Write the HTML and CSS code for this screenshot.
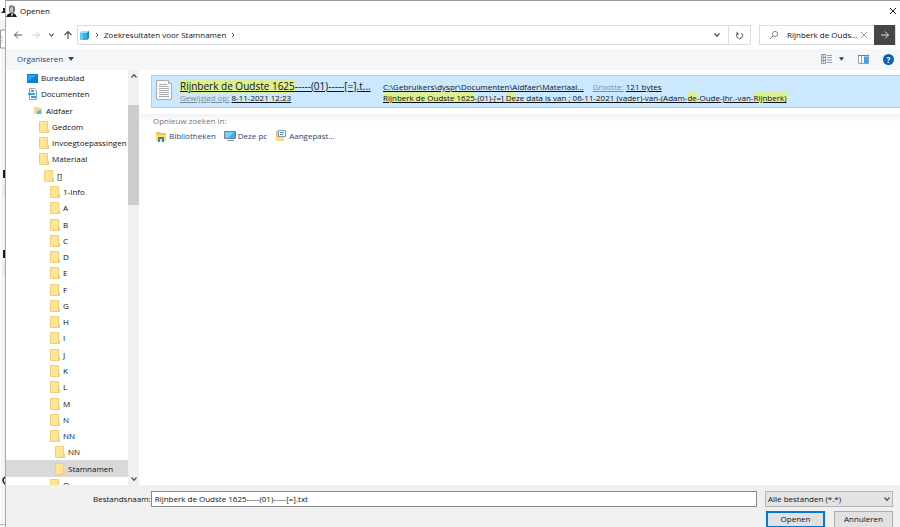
FILE: index.html
```html
<!DOCTYPE html>
<html lang="nl">
<head>
<meta charset="utf-8">
<title>Openen</title>
<link rel="stylesheet" href="styles.css">
</head>
<body>
<svg class="defs" aria-hidden="true">
  <symbol id="folder" viewBox="0 0 10 12"><path d="M0.5 0.5h8v7l1 1v3h-9z" fill="#ffe594" stroke="#efd077"/><path d="M8.500 7.500l1 1v3H7.500z" fill="#f0cb68"/></symbol>
  <symbol id="down" viewBox="0 0 8 8"><path d="M1.5 2.5L4 5.2l2.500-2.700" fill="none" stroke="#555" stroke-width="1.300"/></symbol>
  <symbol id="right" viewBox="0 0 8 8"><path d="M3 2l2 2-2 2" fill="none" stroke="#555"/></symbol>
</svg>
<div class="behind" aria-hidden="true">
  <svg viewBox="0 0 5 527" preserveAspectRatio="xMinYMin slice">
    <path d="M0 0h5v527H0z" fill="#f4f4f4"/><path d="M0 0h5v20H0z" fill="#fff"/><path d="M1 13l2-2V8h2v5z" fill="#222"/>
    <path d="M5 30H0.500v18H5" fill="#fff" stroke="#999"/><path d="M2 36v8" stroke="#aaa" stroke-dasharray="1 1"/>
    <path d="M0 50h1v474H0z" fill="#fff"/><path d="M3 170h2v8H3zM3 250h2v8H3z" fill="#111b2c"/>
    <path d="M3 184h2v14H3zM3 263h2v14H3z" fill="#e8e8e8"/><path d="M5 477q-4 3 0 7" fill="none" stroke="#111" stroke-width="1.500"/><path d="M0 524.500h5" stroke="#bbb"/>
  </svg>
</div>
<main class="dialog">
  <header class="title">
    <svg width="11" height="12" viewBox="0 0 11 12"><path d="M0 12q1-3 4-4h3q3 1 4 4z" fill="#1b1b1b"/><path d="M3 1q3-2 6 1v4L7 9H5L3 6z" fill="#777"/><path d="M4 3q2-2 3 0v3L6 8 4 6z" fill="#c9c9c4"/><path d="M5 9l1 3 1-3z" fill="#eee"/></svg>
    <h1>Openen</h1>
    <button class="plain" aria-label="Sluiten"><svg width="8" height="8" viewBox="0 0 8 8"><path d="M1 1l6 6M7 1L1 7" stroke="#222"/></svg></button>
  </header>
  <nav class="navbar">
    <div class="arrows">
      <button class="plain" aria-label="Terug"><svg width="10" height="10" viewBox="0 0 10 10"><path d="M9 5H1.500M5 1.500L1.500 5 5 8.500" fill="none" stroke="#555"/></svg></button>
      <button class="plain" aria-label="Vooruit"><svg width="10" height="10" viewBox="0 0 10 10"><path d="M1 5h7.500M5.500 2l3 3-3 3" fill="none" stroke="#d0d0d0"/></svg></button>
      <button class="plain" aria-label="Recente locaties"><svg width="7" height="8"><use href="#down"/></svg></button>
      <button class="plain" aria-label="Omhoog"><svg width="10" height="10" viewBox="0 0 10 10"><path d="M5 9V1.500M1.500 5L5 1.500 8.500 5" fill="none" stroke="#555" stroke-width="1.200"/></svg></button>
    </div>
    <div class="address">
      <svg width="11" height="11" viewBox="0 0 11 11"><path d="M1 3l2-2h7v7l-2 2H1z" fill="#35aee8"/><path d="M1 3l2-2h7L8 3z" fill="#9be0fb"/><path d="M8 3l2-2v7l-2 2z" fill="#168bd0"/><path d="M1 3h3v7H1z" fill="#62cbf5"/></svg>
      <svg width="8" height="8"><use href="#right"/></svg>
      <span>Zoekresultaten voor Stamnamen</span>
      <svg width="8" height="8"><use href="#right"/></svg>
      <button class="plain drop" aria-label="Vorige locaties"><svg width="8" height="8"><use href="#down"/></svg></button>
      <button class="plain refresh" aria-label="Vernieuwen"><svg width="9" height="9" viewBox="0 0 9 9"><path d="M6.500 2.200A3 3 0 1 1 3 2M2 .8v2.200h2.200" fill="none" stroke="#555"/></svg></button>
    </div>
    <div class="search">
      <svg width="10" height="10" viewBox="0 0 10 10"><circle cx="6" cy="4" r="2.600" fill="none" stroke="#888"/><path d="M4 6L1 9" stroke="#888"/></svg>
      <input aria-label="Zoeken" value="Rijnberk de Ouds...">
      <button class="plain" aria-label="Zoekopdracht wissen"><svg width="8" height="8" viewBox="0 0 8 8"><path d="M1 1l6 6M7 1L1 7" stroke="#999"/></svg></button>
      <button class="go" aria-label="Zoeken starten"><svg width="10" height="10" viewBox="0 0 10 10"><path d="M1 5h7.500M5 1.500L8.500 5 5 8.500" fill="none" stroke="#ddd"/></svg></button>
    </div>
  </nav>
  <div class="toolbar">
    <button class="plain organise">Organiseren <svg width="6" height="4" viewBox="0 0 6 4"><path d="M0 0h6L3 4z" fill="#29466f"/></svg></button>
    <button class="plain view" aria-label="Weergave"><svg width="11" height="10" viewBox="0 0 11 10"><path d="M.5.5h4v9h-4zM.5 3.500h4M.5 6.500h4" fill="#eee" stroke="#999"/><path d="M2 2h1M2 5h1M2 8h1" stroke="#4479b8"/><path d="M6 1.500h5M6 3.500h5M6 6h5M6 8.500h5" stroke="#8aa0c4"/></svg><svg width="5" height="4" viewBox="0 0 6 4"><path d="M0 0h6L3 4z" fill="#1c3c68"/></svg></button>
    <button class="plain" aria-label="Voorbeeldvenster"><svg width="11" height="9" viewBox="0 0 11 9"><path d="M.5.5h10v8H.5zM3.500 1v7" fill="#fff" stroke="#8fa0b2"/><path d="M6 1.500h4V8H6z" fill="#3ba2ea"/><path d="M0 .5h11" stroke="#67819b"/></svg></button>
    <button class="help" aria-label="Help">?</button>
  </div>
  <div class="content">
    <aside class="side">
      <ul class="tree">
        <li class="l0"><svg width="11" height="9" viewBox="0 0 11 9"><path d="M0 0h11v9H0z" fill="#087fd9"/><path d="M1 1h9L1 7z" fill="#21a7f5"/></svg>Bureaublad</li>
        <li class="l0"><svg width="11" height="12" viewBox="0 0 11 12"><path d="M2.500.5h5l2 2v9h-7z" fill="#f5f9fc" stroke="#8ba3b5"/><path d="M1 5h7v2H1zM4 8h5v2H4zM4 2h3v2H4z" fill="#3c9ed6"/></svg>Documenten</li>
        <li class="l1"><svg width="9" height="9" viewBox="0 0 9 9"><path d="M0 1h4l1 1h3v6H0z" fill="#f6dc85"/><path d="M3 3h5v5H3z" fill="#b8dcf4"/><path d="M4 8V5M6 8V4" stroke="#2785ce"/></svg>Aldfaer</li>
        <li class="l2"><svg><use href="#folder"/></svg>Gedcom</li>
        <li class="l2"><svg><use href="#folder"/></svg>Invoegtoepassingen</li>
        <li class="l2"><svg><use href="#folder"/></svg>Materiaal</li>
        <li class="l3"><svg><use href="#folder"/></svg>[]</li>
        <li class="l4"><svg><use href="#folder"/></svg>1-Info</li>
        <li class="l4"><svg><use href="#folder"/></svg>A</li>
        <li class="l4"><svg><use href="#folder"/></svg>B</li>
        <li class="l4"><svg><use href="#folder"/></svg>C</li>
        <li class="l4"><svg><use href="#folder"/></svg>D</li>
        <li class="l4"><svg><use href="#folder"/></svg>E</li>
        <li class="l4"><svg><use href="#folder"/></svg>F</li>
        <li class="l4"><svg><use href="#folder"/></svg>G</li>
        <li class="l4"><svg><use href="#folder"/></svg>H</li>
        <li class="l4"><svg><use href="#folder"/></svg>I</li>
        <li class="l4"><svg><use href="#folder"/></svg>J</li>
        <li class="l4"><svg><use href="#folder"/></svg>K</li>
        <li class="l4"><svg><use href="#folder"/></svg>L</li>
        <li class="l4"><svg><use href="#folder"/></svg>M</li>
        <li class="l4"><svg><use href="#folder"/></svg>N</li>
        <li class="l4"><svg><use href="#folder"/></svg>NN</li>
        <li class="l5"><svg><use href="#folder"/></svg>NN</li>
        <li class="l5 selected"><svg><use href="#folder"/></svg>Stamnamen</li>
        <li class="l4"><svg><use href="#folder"/></svg>O</li>
      </ul>
      <div class="scroll" aria-hidden="true">
        <svg class="up" width="8" height="8"><use href="#down"/></svg>
        <div class="track"><div class="thumb"></div></div>
        <svg width="8" height="8"><use href="#down"/></svg>
      </div>
    </aside>
    <section class="results">
      <article class="item">
        <svg width="16" height="20" viewBox="0 0 16 20"><path d="M.5.5h12l3 3v16H.5z" fill="#fafafa" stroke="#a5adb3"/><path d="M12.500.5v3h3" fill="#ddd" stroke="#a5adb3"/><path d="M3 4.500h8M3 6.500h10M3 8.500h10M3 10.500h10M3 12.500h10M3 14.500h10M3 16.500h10" stroke="#aaa"/></svg>
        <div class="main">
          <a href="#" class="name"><mark>Rijnberk de Oudste 1625</mark>-----(01)-----[=].t...</a>
          <div class="line"><span class="key">Gewijzigd op:</span> <u>8-11-2021 12:23</u></div>
        </div>
        <div class="more">
          <div class="line path"><u>C:\Gebruikers\dyspr\Documenten\Aldfaer\Materiaal...</u><span><span class="key">Grootte:</span> <u>121 bytes</u></span></div>
          <div class="line"><u><mark>Rijnberk de Oudste 1625</mark>-(01)-[=] <mark>De</mark>ze data is van ; 06-11-2021 (vader)-van-(Adam-<mark>de</mark>-Oude-Jhr.-van-<mark>Rijnberk)</mark></u></div>
        </div>
      </article>
      <div class="again">
        <h2>Opnieuw zoeken in:</h2>
        <div class="places">
          <a href="#"><svg width="12" height="11" viewBox="0 0 12 11"><path d="M1 1h4l1 1h5v8H1z" fill="#f4c64e"/><path d="M1 4h10v6H1z" fill="#ffdc72"/><path d="M3 11V6h6v5H7V8H5v3z" fill="#3589c9"/></svg>Bibliotheken</a>
          <a href="#"><svg width="12" height="11" viewBox="0 0 12 11"><path d="M.5.5h11v7H.5z" fill="#35b1f0" stroke="#68849a"/><path d="M1 1h9L4 7H1z" fill="#79d1fb"/><path d="M3 9.500h7" stroke="#8198a8"/></svg>Deze pc</a>
          <a href="#"><svg width="12" height="12" viewBox="0 0 12 12"><path d="M1 1h4v10H1z" fill="#efc75e"/><path d="M1 7h8v4H1z" fill="#ffdb79"/><path d="M3.500.5h7v6h-7z" fill="#f6fbff" stroke="#7f9bb3"/><path d="M5 2.500h4M5 4.500h3" stroke="#5a8fc0"/></svg>Aangepast...</a>
        </div>
      </div>
    </section>
  </div>
  <footer class="footer">
    <label for="file">Bestandsnaam:</label>
    <input id="file" class="file" value="Rijnberk de Oudste 1625-----(01)-----[=].txt">
    <div class="actions">
      <div class="select"><select aria-label="Bestandstype"><option>Alle bestanden (*.*)</option></select><svg width="8" height="8"><use href="#down"/></svg></div>
      <div class="buttons"><button class="primary">Openen</button><button>Annuleren</button></div>
    </div>
  </footer>
</main>
</body>
</html>
```
FILE: styles.css
```css
* { box-sizing: border-box; }
body {
  margin: 0;
  height: 100vh;
  display: flex;
  overflow: hidden;
  background: #fff;
  color: #111;
  font: 8px/12px "Open Sans", "Noto Sans", sans-serif;
}
svg { flex: none; display: block; }
.defs { position: absolute; width: 0; height: 0; }
button, input, select { font: inherit; color: inherit; margin: 0; }
h1, h2 { margin: 0; font: inherit; }
a { color: inherit; }
.plain {
  display: flex;
  align-items: center;
  justify-content: center;
  padding: 0;
  border: 0;
  background: none;
}
.behind { width: 5px; flex: none; }
.behind svg { width: 100%; height: 100%; }
.dialog {
  flex: 1;
  min-width: 0;
  display: flex;
  flex-direction: column;
  border-top: 1px solid #999;
  border-left: 1px solid #aaa;
}
.title {
  display: flex;
  align-items: center;
  gap: 3px;
  height: 20px;
  flex: none;
  padding-right: 3px;
}
.title h1 { flex: 1; }
.navbar {
  display: flex;
  align-items: center;
  flex: none;
  height: 28px;
  padding-right: 4px;
}
.arrows {
  display: flex;
  justify-content: space-between;
  width: 71px;
  padding: 0 4px 0 7px;
}
.address {
  flex: 1;
  display: flex;
  align-items: center;
  gap: 3px;
  height: 20px;
  padding-left: 1px;
  border: 1px solid #dcdcdc;
}
.drop { margin-left: auto; width: 16px; }
.refresh { width: 22px; height: 18px; border-left: 1px solid #dcdcdc; }
.search {
  display: flex;
  align-items: center;
  width: 137px;
  height: 20px;
  margin-left: 8px;
  padding-left: 9px;
  border: 1px solid #dcdcdc;
}
.search input {
  flex: 1;
  min-width: 0;
  border: 0;
  padding: 0 0 0 8px;
  outline: 0;
}
.go {
  display: flex;
  align-items: center;
  justify-content: center;
  width: 21px;
  height: 20px;
  margin-left: 6px;
  padding: 0;
  border: 0;
  background: #464646;
}
.toolbar {
  display: flex;
  align-items: center;
  gap: 14px;
  flex: none;
  height: 21px;
  padding: 0 6px 1px 11px;
  background: #f5f6f7;
}
.organise { gap: 5px; color: #29466f; margin-right: auto; }
.view { gap: 7px; }
.help {
  width: 11px;
  height: 11px;
  padding: 0;
  border: 0;
  border-radius: 50%;
  background: #0a62b8;
  color: #fff;
  font-weight: 700;
  line-height: 11px;
}
.content { flex: 1; min-height: 0; display: flex; }
.side { flex: none; display: flex; overflow: hidden; }
.tree {
  width: 122px;
  height: calc(100% + 8px);
  margin: 0;
  padding: 0;
  list-style: none;
  display: grid;
  grid-auto-rows: 1fr;
}
.tree li { display: flex; align-items: center; gap: 3px; min-height: 0; white-space: nowrap; }
.tree li svg:not([width]) { width: 10px; height: 12px; }
.l0 { padding-left: 21px; }
.l1 { padding-left: 28px; }
.l2 { padding-left: 33px; }
.l3 { padding-left: 38px; }
.l4 { padding-left: 44px; }
.l5 { padding-left: 49px; }
.selected { background: #d9d9d9; }
.scroll {
  width: 11px;
  display: flex;
  flex-direction: column;
  align-items: center;
  padding: 2px 0;
  background: #f0f0f0;
}
.up { transform: rotate(180deg); }
.track { flex: 1; width: 100%; padding-top: 25px; }
.thumb { height: 27%; background: #cdcdcd; }
.results { flex: 1; min-width: 0; }
.item {
  display: flex;
  height: 33px;
  margin: 5px 0 6px 12px;
  padding: 4px 0 0 4px;
  background: #cce8ff;
  border: 1px solid #a4d3f5;
  border-right: 0;
  white-space: nowrap;
}
.main { width: 203px; margin-left: 8px; }
.name { display: block; font-size: 10px; line-height: 12px; }
.more { padding-top: 1px; }
.line { height: 11px; }
.path { display: flex; gap: 9px; }
.key { color: #7b8b98; text-decoration: underline; }
mark { background: #dcef94; color: inherit; border-radius: 3px; }
.again { padding: 1px 0 0 14px; background: linear-gradient(#f3f3f3, #fff 8px); }
.again h2 { color: #777; }
.places { display: flex; gap: 8px; padding: 3px 0 0 2px; }
.places a { display: flex; align-items: center; gap: 2px; color: #29466f; text-decoration: none; }
.footer {
  display: flex;
  align-items: flex-start;
  flex: none;
  height: 42px;
  padding: 6px 7px 0 87px;
  background: #f0f0f0;
}
.footer label { line-height: 16px; }
.file { flex: 1; min-width: 0; height: 16px; padding: 0 3px 1px; border: 1px solid #8a8a8a; background: #fff; }
.actions { width: 128px; margin-left: 8px; }
.select { display: flex; align-items: center; position: relative; }
.select select {
  appearance: none;
  width: 100%;
  height: 16px;
  padding: 0 2px;
  border: 1px solid #b5b5b5;
  border-radius: 0;
  background: #e3e3e3;
}
.select svg { position: absolute; right: 2px; pointer-events: none; }
.buttons { display: flex; gap: 9px; padding: 4px 0 0 1px; }
.buttons button { flex: 1; height: 17px; padding: 0 0 1px; border: 1px solid #adadad; background: #e1e1e1; }
.buttons .primary { border: 1px solid #0078d7; outline: 1px solid #0078d7; outline-offset: -2px; }
```
